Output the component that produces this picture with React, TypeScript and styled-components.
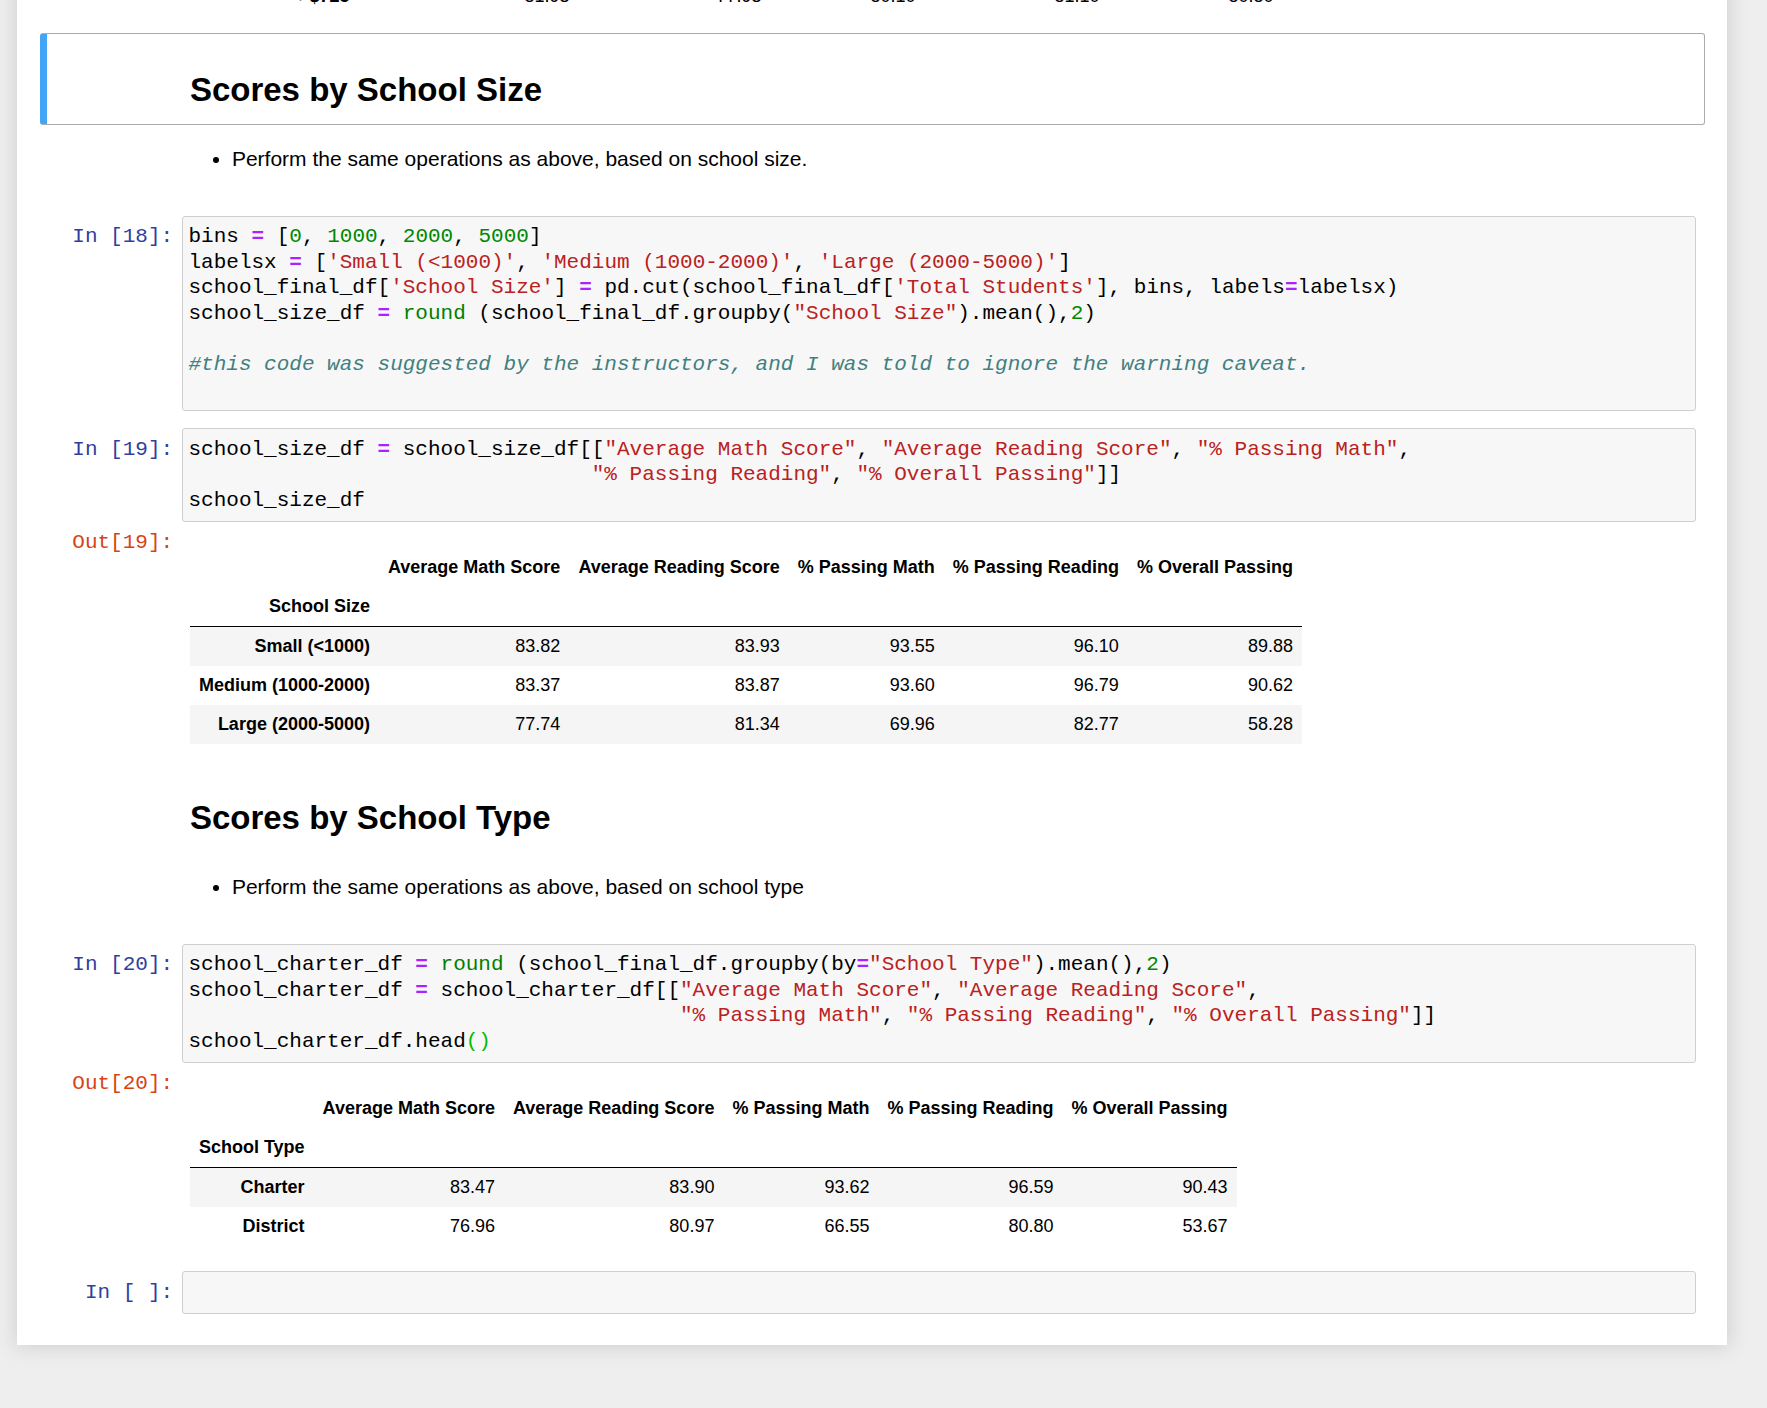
import React from "react";
import styled, { createGlobalStyle, css } from "styled-components";

const GlobalStyle = createGlobalStyle`
  html, body {
    margin: 0;
    padding: 0;
    background: #eeeeee;
  }
  body {
    font-family: "Liberation Sans", Arial, sans-serif;
    color: #000;
  }
`;

const MONO = `"Liberation Mono", "Courier New", monospace`;
const SANS = `"Liberation Sans", Arial, sans-serif`;

const Page = styled.div`
  min-height: 1408px;
  background: #eeeeee;
  padding-left: 17px;
  overflow: hidden;
`;

const NotebookContainer = styled.div`
  width: 1710px;
  box-sizing: border-box;
  margin-top: -57.5px;
  padding: 0 22.5px 22.5px;
  background: #ffffff;
  box-shadow: 0 0 18px 1.5px rgba(87, 87, 87, 0.2);
`;

const Cell = styled.div<{ $selected?: boolean }>`
  display: flex;
  flex-direction: column;
  border: 1px solid transparent;
  border-radius: 3px;
  padding: 7.5px;
  ${(p) =>
    p.$selected &&
    css`
      border-color: #ababab;
      border-left-width: 0;
      padding-left: 8.5px;
      background: linear-gradient(
        to right,
        #42a5f5 0,
        #42a5f5 7.5px,
        transparent 7.5px,
        transparent 100%
      );
    `}
`;

const Row = styled.div`
  display: flex;
  align-items: flex-start;
`;

const Prompt = styled.div<{ $kind: "in" | "out" | "none" }>`
  flex: 0 0 133.5px;
  box-sizing: border-box;
  padding: 8.4px;
  font-family: ${MONO};
  font-size: 21px;
  line-height: 25.5px;
  text-align: right;
  white-space: pre;
  color: ${(p) => (p.$kind === "out" ? "#D84315" : "#303F9F")};
`;

const InputArea = styled.div`
  flex: 1;
  min-width: 0;
  border: 1px solid #cfcfcf;
  border-radius: 3px;
  background: #f7f7f7;
  padding: 7.5px 0;
`;

const CodeLine = styled.pre`
  margin: 0;
  padding: 0 6px;
  min-height: 25.5px;
  font-family: ${MONO};
  font-size: 21px;
  line-height: 25.5px;
  color: #000;
  white-space: pre;
`;

type Tok = "n" | "o" | "num" | "s" | "c" | "b" | "m";

const tokColor: Record<Tok, string> = {
  n: "#000000",
  o: "#AA22FF",
  num: "#008800",
  s: "#BA2121",
  c: "#408080",
  b: "#008000",
  m: "#00bb00",
};

const Token = styled.span<{ $t: Tok }>`
  color: ${(p) => tokColor[p.$t]};
  font-weight: ${(p) => (p.$t === "o" ? "bold" : "normal")};
  font-style: ${(p) => (p.$t === "c" ? "italic" : "normal")};
`;

const Rendered = styled.div`
  flex: 1;
  min-width: 0;
  padding: 10.5px 10.5px 10.5px 8.4px;
  font-family: ${SANS};
  font-size: 21px;
  line-height: 30px;
  color: #000;
`;

const Heading = styled.h2`
  margin: 21px 0 0 0;
  font-family: ${SANS};
  font-size: 33px;
  line-height: 1;
  font-weight: bold;
`;

const Bullets = styled.ul`
  margin: 0 0 14px 42px;
  padding: 0;
  list-style: disc;
`;

const OutputSubarea = styled.div`
  flex: 1;
  min-width: 0;
  padding: 8.4px;
`;

const Table = styled.table<{ $fixedWidth?: number; $shadeOdd?: boolean }>`
  margin-top: 18px;
  border: none;
  border-collapse: collapse;
  border-spacing: 0;
  font-family: ${SANS};
  font-size: 18px;
  color: #000;
  ${(p) =>
    p.$fixedWidth &&
    css`
      table-layout: fixed;
      width: ${p.$fixedWidth}px;
    `}

  thead {
    border-bottom: 1px solid #000;
    vertical-align: bottom;
  }

  th,
  td {
    text-align: right;
    vertical-align: middle;
    padding: 9px;
    line-height: normal;
    white-space: nowrap;
    border: none;
  }

  th {
    font-weight: bold;
  }

  tbody tr:nth-child(odd) {
    background: ${(p) => (p.$shadeOdd === false ? "transparent" : "#f5f5f5")};
  }
`;

type Line = [Tok, string][];

const Code: React.FC<{ lines: Line[] }> = ({ lines }) => (
  <InputArea>
    {lines.map((line, i) => (
      <CodeLine key={i}>
        {line.map(([t, s], j) => (
          <Token key={j} $t={t}>
            {s}
          </Token>
        ))}
      </CodeLine>
    ))}
  </InputArea>
);

const COLS = [
  "Average Math Score",
  "Average Reading Score",
  "% Passing Math",
  "% Passing Reading",
  "% Overall Passing",
];

const DataFrame: React.FC<{
  indexName: string;
  rows: [string, string[]][];
}> = ({ indexName, rows }) => (
  <Table>
    <thead>
      <tr>
        <th></th>
        {COLS.map((c) => (
          <th key={c}>{c}</th>
        ))}
      </tr>
      <tr>
        <th>{indexName}</th>
        {COLS.map((c) => (
          <th key={c}></th>
        ))}
      </tr>
    </thead>
    <tbody>
      {rows.map(([idx, vals]) => (
        <tr key={idx}>
          <th>{idx}</th>
          {vals.map((v, i) => (
            <td key={i}>{v}</td>
          ))}
        </tr>
      ))}
    </tbody>
  </Table>
);

const cell18: Line[] = [
  [["n", "bins "], ["o", "="], ["n", " ["], ["num", "0"], ["n", ", "], ["num", "1000"], ["n", ", "], ["num", "2000"], ["n", ", "], ["num", "5000"], ["n", "]"]],
  [["n", "labelsx "], ["o", "="], ["n", " ["], ["s", "'Small (<1000)'"], ["n", ", "], ["s", "'Medium (1000-2000)'"], ["n", ", "], ["s", "'Large (2000-5000)'"], ["n", "]"]],
  [["n", "school_final_df["], ["s", "'School Size'"], ["n", "] "], ["o", "="], ["n", " pd.cut(school_final_df["], ["s", "'Total Students'"], ["n", "], bins, labels"], ["o", "="], ["n", "labelsx)"]],
  [["n", "school_size_df "], ["o", "="], ["n", " "], ["b", "round"], ["n", " (school_final_df.groupby("], ["s", "\"School Size\""], ["n", ").mean(),"], ["num", "2"], ["n", ")"]],
  [],
  [["c", "#this code was suggested by the instructors, and I was told to ignore the warning caveat."]],
  [],
];

const cell19: Line[] = [
  [["n", "school_size_df "], ["o", "="], ["n", " school_size_df[["], ["s", "\"Average Math Score\""], ["n", ", "], ["s", "\"Average Reading Score\""], ["n", ", "], ["s", "\"% Passing Math\""], ["n", ","]],
  [["n", " ".repeat(32)], ["s", "\"% Passing Reading\""], ["n", ", "], ["s", "\"% Overall Passing\""], ["n", "]]"]],
  [["n", "school_size_df"]],
];

const cell20: Line[] = [
  [["n", "school_charter_df "], ["o", "="], ["n", " "], ["b", "round"], ["n", " (school_final_df.groupby(by"], ["o", "="], ["s", "\"School Type\""], ["n", ").mean(),"], ["num", "2"], ["n", ")"]],
  [["n", "school_charter_df "], ["o", "="], ["n", " school_charter_df[["], ["s", "\"Average Math Score\""], ["n", ", "], ["s", "\"Average Reading Score\""], ["n", ","]],
  [["n", " ".repeat(39)], ["s", "\"% Passing Math\""], ["n", ", "], ["s", "\"% Passing Reading\""], ["n", ", "], ["s", "\"% Overall Passing\""], ["n", "]]"]],
  [["n", "school_charter_df.head"], ["m", "()"]],
];

const prevWidths = [168.6, 220, 192, 154, 184, 174];

export default function App() {
  return (
    <>
      <GlobalStyle />
      <Page>
        <NotebookContainer>
          {/* tail of the previous output, scrolled mostly out of view */}
          <Cell>
            <Row>
              <Prompt $kind="out"></Prompt>
              <OutputSubarea>
                <Table $fixedWidth={1092.6} $shadeOdd={false}>
                  <colgroup>
                    {prevWidths.map((w, i) => (
                      <col key={i} style={{ width: w }} />
                    ))}
                  </colgroup>
                  <tbody>
                    <tr>
                      <th>&gt;$725</th>
                      <td>81.93</td>
                      <td>77.93</td>
                      <td>80.10</td>
                      <td>81.10</td>
                      <td>80.80</td>
                    </tr>
                  </tbody>
                </Table>
              </OutputSubarea>
            </Row>
          </Cell>

          <Cell $selected>
            <Row>
              <Prompt $kind="none"></Prompt>
              <Rendered>
                <Heading>Scores by School Size</Heading>
              </Rendered>
            </Row>
          </Cell>

          <Cell>
            <Row>
              <Prompt $kind="none"></Prompt>
              <Rendered>
                <Bullets>
                  <li>Perform the same operations as above, based on school size.</li>
                </Bullets>
              </Rendered>
            </Row>
          </Cell>

          <Cell>
            <Row>
              <Prompt $kind="in">In [18]:</Prompt>
              <Code lines={cell18} />
            </Row>
          </Cell>

          <Cell>
            <Row>
              <Prompt $kind="in">In [19]:</Prompt>
              <Code lines={cell19} />
            </Row>
            <Row>
              <Prompt $kind="out">Out[19]:</Prompt>
              <OutputSubarea>
                <DataFrame
                  indexName="School Size"
                  rows={[
                    ["Small (<1000)", ["83.82", "83.93", "93.55", "96.10", "89.88"]],
                    ["Medium (1000-2000)", ["83.37", "83.87", "93.60", "96.79", "90.62"]],
                    ["Large (2000-5000)", ["77.74", "81.34", "69.96", "82.77", "58.28"]],
                  ]}
                />
              </OutputSubarea>
            </Row>
          </Cell>

          <Cell>
            <Row>
              <Prompt $kind="none"></Prompt>
              <Rendered>
                <Heading>Scores by School Type</Heading>
              </Rendered>
            </Row>
          </Cell>

          <Cell>
            <Row>
              <Prompt $kind="none"></Prompt>
              <Rendered>
                <Bullets>
                  <li>Perform the same operations as above, based on school type</li>
                </Bullets>
              </Rendered>
            </Row>
          </Cell>

          <Cell>
            <Row>
              <Prompt $kind="in">In [20]:</Prompt>
              <Code lines={cell20} />
            </Row>
            <Row>
              <Prompt $kind="out">Out[20]:</Prompt>
              <OutputSubarea>
                <DataFrame
                  indexName="School Type"
                  rows={[
                    ["Charter", ["83.47", "83.90", "93.62", "96.59", "90.43"]],
                    ["District", ["76.96", "80.97", "66.55", "80.80", "53.67"]],
                  ]}
                />
              </OutputSubarea>
            </Row>
          </Cell>

          <Cell>
            <Row>
              <Prompt $kind="in">In [ ]:</Prompt>
              <Code lines={[[]]} />
            </Row>
          </Cell>
        </NotebookContainer>
      </Page>
    </>
  );
}
